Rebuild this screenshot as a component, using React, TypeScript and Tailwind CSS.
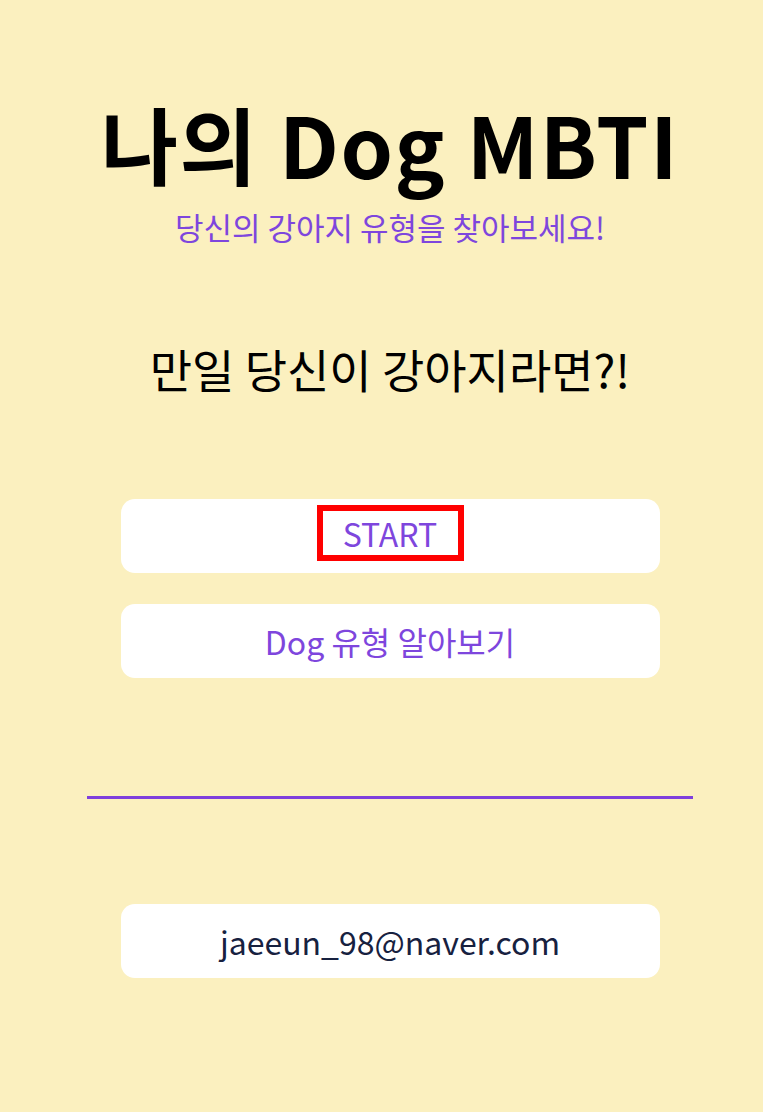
export default function App() {
    const font = { fontFamily: '"Noto Sans CJK KR", "Noto Sans", sans-serif' };

    return (
        <div className="min-h-[1112px] w-full bg-[#fbf0bf] pl-[17px]" style={font}>
            <div className="flex flex-col items-center pt-[88px]">
                <h1 className="text-[84px] font-bold leading-[110px] text-black tracking-[1.5px]">나의 Dog MBTI</h1>
                <p className="mt-[9px] text-[31px] leading-[40px] text-[#7e46dd]">당신의 강아지 유형을 찾아보세요!</p>
                <p className="mt-[91px] text-[46px] leading-[60px] text-black">만일 당신이 강아지라면?!</p>

                <div className="mt-[101px] flex w-[539px] flex-col gap-[31px]">
                    <button className="flex h-[74px] items-start justify-center rounded-[14px] bg-white pt-[6px]">
                        <span className="flex h-[56px] w-[147px] items-center justify-center border-[6px] border-[#ff0000] text-[32px] leading-none text-[#7e46dd]">
                            START
                        </span>
                    </button>
                    <button className="flex h-[74px] items-center justify-center rounded-[14px] bg-white text-[32px] leading-none text-[#7e46dd]">
                        Dog 유형 알아보기
                    </button>
                </div>

                <hr className="mt-[118px] w-[606px] border-0 border-t-[3px] border-[#7f3fdd]" />

                <div className="mt-[105px] flex h-[74px] w-[539px] items-center justify-center rounded-[14px] bg-white text-[32px] leading-none text-[#17213f]">
                    jaeeun_98@naver.com
                </div>
            </div>
        </div>
    );
}
